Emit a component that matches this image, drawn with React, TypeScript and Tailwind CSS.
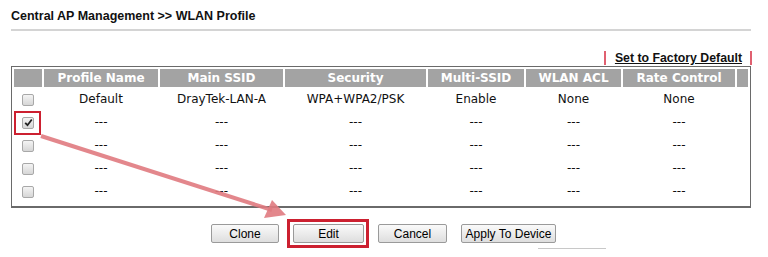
import React from "react";

const cols = [
  { w: "w-[28px]", h: "" },
  { w: "w-[114px]", h: "Profile Name" },
  { w: "w-[123px]", h: "Main SSID" },
  { w: "w-[141px]", h: "Security" },
  { w: "w-[96px]", h: "Multi-SSID" },
  { w: "w-[95px]", h: "WLAN ACL" },
  { w: "w-[112px]", h: "Rate Control" },
  { w: "w-[11px]", h: "" },
];

const rows = [
  ["Default", "DrayTek-LAN-A", "WPA+WPA2/PSK", "Enable", "None", "None"],
  ["---", "---", "---", "---", "---", "---"],
  ["---", "---", "---", "---", "---", "---"],
  ["---", "---", "---", "---", "---", "---"],
  ["---", "---", "---", "---", "---", "---"],
];

function Checkbox({ checked }: { checked?: boolean }) {
  return (
    <div className="mx-auto w-[12px] h-[12px] rounded-[2px] border border-[#a8a8a8] bg-gradient-to-b from-[#f4f4f4] to-[#d6d6d6] flex items-center justify-center">
      {checked && (
        <svg width="9" height="9" viewBox="0 0 9 9">
          <path d="M1.2 4.8 L3.5 7.2 L7.8 1.5" fill="none" stroke="#222" strokeWidth="1.8" />
        </svg>
      )}
    </div>
  );
}

function Btn({ label, w }: { label: string; w: string }) {
  return (
    <button className={`${w} h-[19px] border border-[#9a9a9a] rounded-[2px] bg-gradient-to-b from-[#fafafa] to-[#dedede] text-[12px] text-black font-['Liberation_Sans',sans-serif] leading-none`}>
      {label}
    </button>
  );
}

export default function App() {
  return (
    <div className="relative w-[768px] h-[257px] bg-white overflow-hidden font-['Liberation_Sans',sans-serif]">
      <div className="pl-[11px] pt-[9px] h-[29px] text-[12.5px] font-bold text-[#111] leading-[14px]">
        Central AP Management &gt;&gt; WLAN Profile
      </div>
      <div className="ml-[11px] w-[740px] h-[2px] bg-[#d4d4d4]" />
      <div className="h-[35px] flex items-end justify-end pr-[16px]">
        <div className="flex items-center h-[14px] mb-[1px]">
          <div className="w-[2px] h-[14px] bg-[#e06070]" />
          <span className="ml-[9px] text-[12.3px] font-bold text-[#111] underline leading-[14px]">
            Set to Factory Default
          </span>
          <div className="ml-[8px] w-[2px] h-[14px] bg-[#e06070]" />
        </div>
      </div>
      <table className="ml-[11px] border border-b-[2px] border-[#6a6a6a] border-separate border-spacing-[2px] font-['DejaVu_Sans',sans-serif] text-[12px] text-[#111]">
        <thead>
          <tr>
            {cols.map((c, i) => (
              <th
                key={i}
                className={`${c.w} h-[18px] p-0 bg-[#a3a3a3] text-white font-bold text-center leading-[18px]`}
              >
                {c.h}
              </th>
            ))}
          </tr>
        </thead>
        <tbody>
          {rows.map((r, ri) => (
            <tr key={ri}>
              <td className="h-[21px] p-0">
                <Checkbox checked={ri === 1} />
              </td>
              {r.map((v, ci) => (
                <td key={ci} className="p-0 text-center leading-[21px]">
                  {v}
                </td>
              ))}
              <td className="p-0" />
            </tr>
          ))}
          <tr>
            <td colSpan={8} className="h-0 p-0" />
          </tr>
        </tbody>
      </table>
      <div className="mt-[16px] flex justify-center gap-[14px] pr-[1px]">
        <Btn label="Clone" w="w-[68px]" />
        <Btn label="Edit" w="w-[71px]" />
        <Btn label="Cancel" w="w-[69px]" />
        <Btn label="Apply To Device" w="w-[95px]" />
      </div>
      <div className="absolute left-[538px] top-[248px] w-[68px] h-[1px] bg-[#c8c8c8]" />

      {/* overlays */}
      <div className="absolute left-[14px] top-[111px] w-[27px] h-[24px] border-[2px] border-[#cc2030]" />
      <div className="absolute left-[287px] top-[219px] w-[82px] h-[29px] border-[3px] border-[#cc2030]" />
      <svg className="absolute left-0 top-0 pointer-events-none" width="768" height="257">
        <line x1="41" y1="136" x2="272" y2="210" stroke="#e07a80" strokeWidth="4" strokeOpacity="0.9" />
        <polygon points="286,215 264,218 272,200" fill="#e07a80" fillOpacity="0.9" />
      </svg>
    </div>
  );
}
